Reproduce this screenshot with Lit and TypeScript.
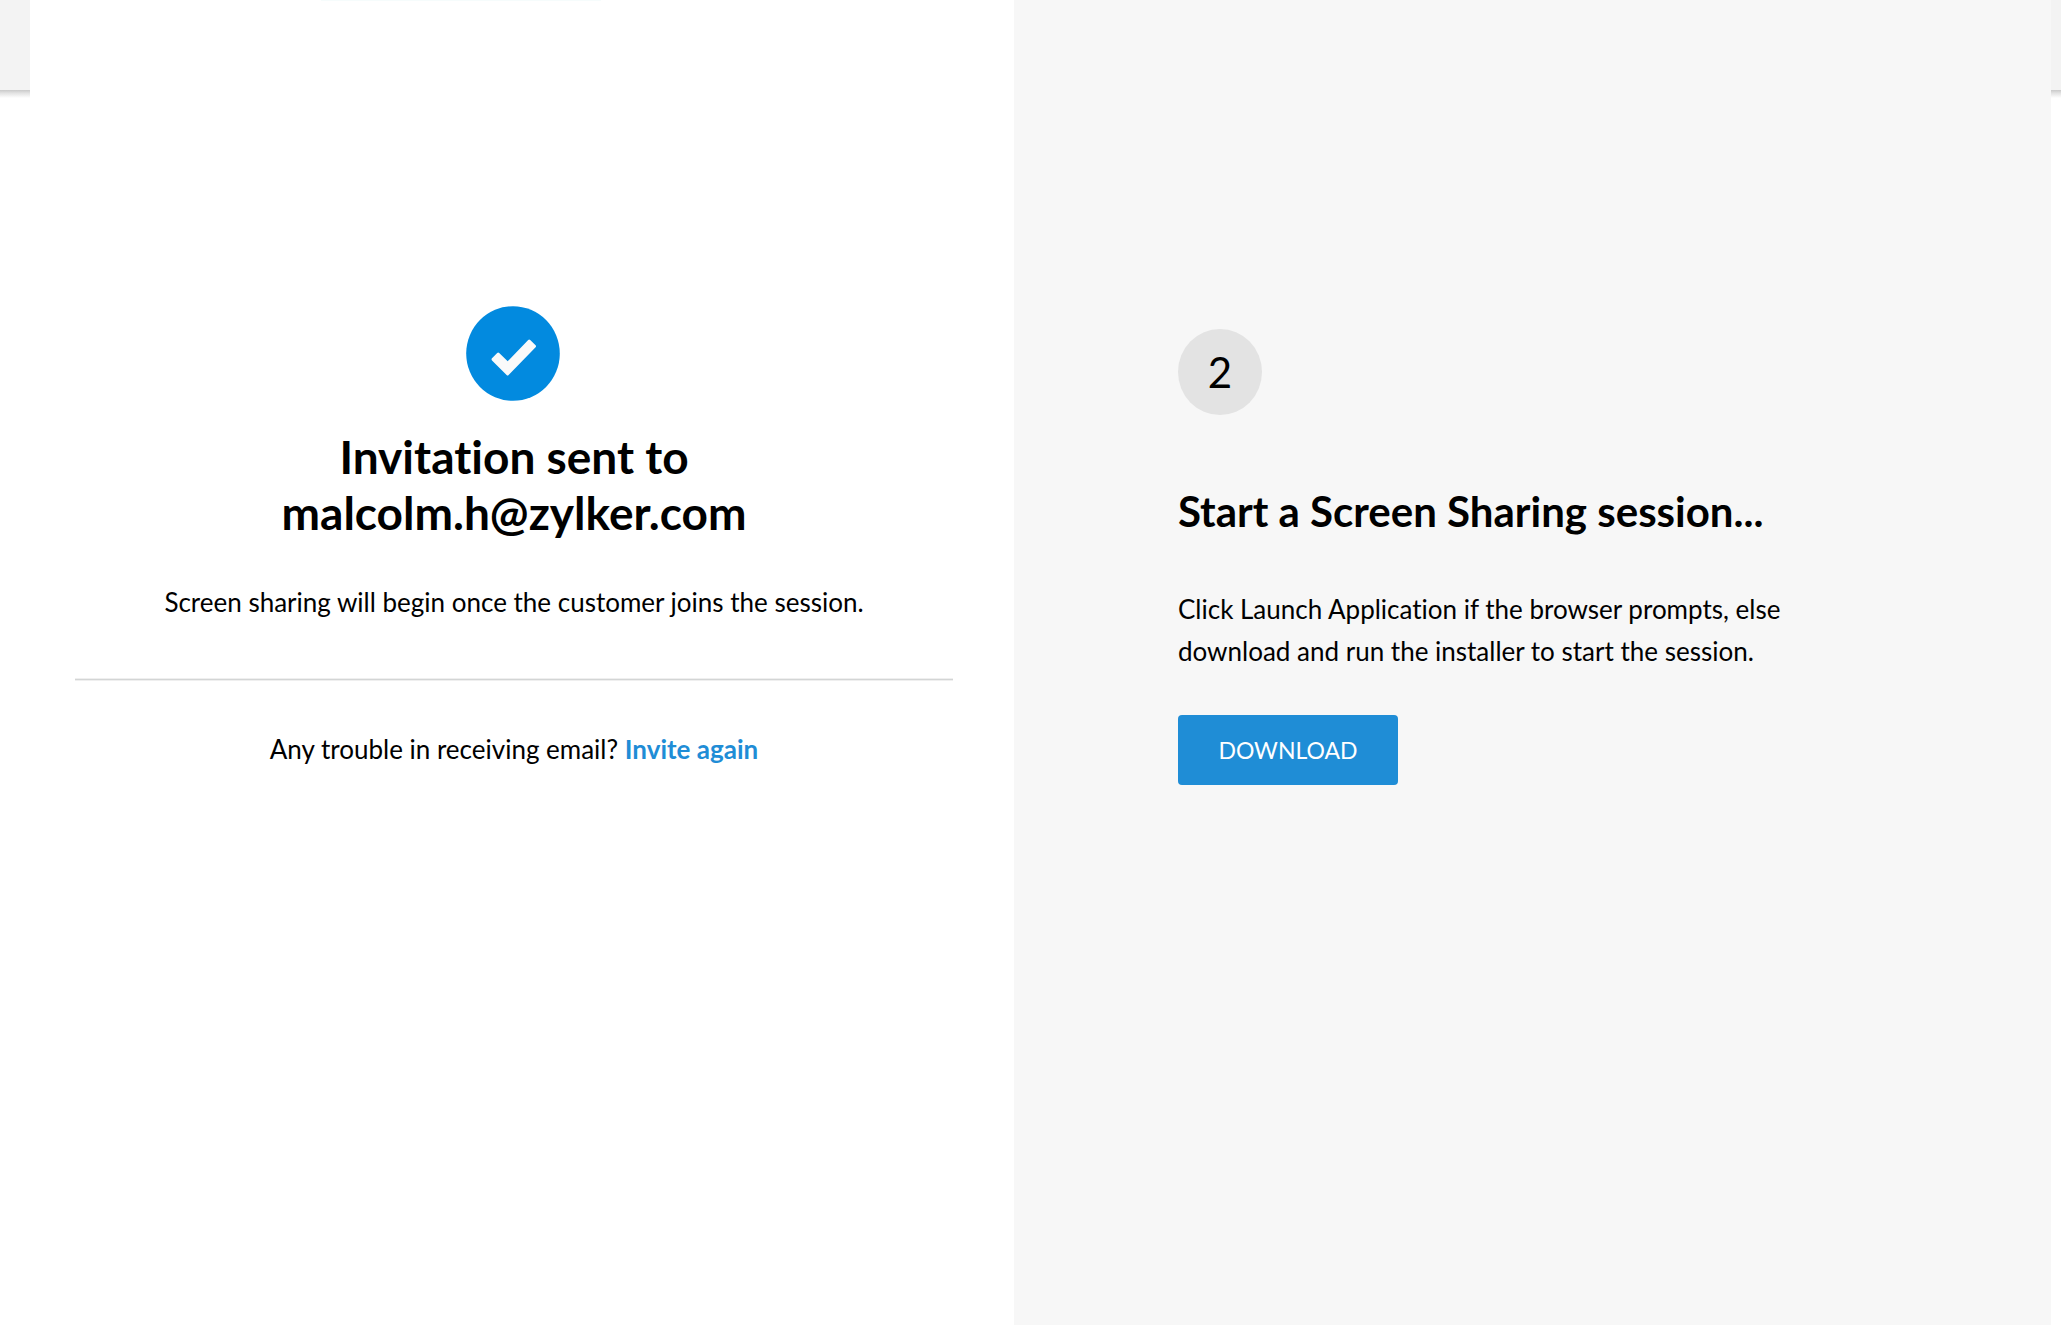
import { LitElement, html, css } from "lit";
import { customElement, property } from "lit/decorators.js";

@customElement("invitation-status")
export class InvitationStatus extends LitElement {
  @property() email = "";

  static styles = css`
    :host {
      display: block;
      background: #fff;
    }
    .tab-edge {
      width: 280px;
      height: 1px;
      margin-left: 291px;
      background: #f6fcfc;
    }
    .content {
      display: flex;
      flex-direction: column;
      align-items: center;
      padding: 305px 61px 40px 45px;
      text-align: center;
    }
    .check {
      display: block;
      width: 96px;
      height: 95px;
    }
    .title {
      margin: 28px 0 40px;
      font-size: 46px;
      line-height: 56px;
      font-weight: 700;
    }
    .email {
      display: block;
    }
    .text {
      margin: 0;
      font-size: 26px;
      line-height: 42px;
    }
    .divider {
      width: 100%;
      height: 1px;
      margin: 55px 0 47px;
      border: 0 solid #efefef;
      border-width: 1px 0;
      background: #d3d5d5;
    }
    .link {
      color: #1f8dd6;
      font-weight: 700;
      text-decoration: none;
    }
  `;

  render() {
    return html`
      <div class="tab-edge"></div>
      <div class="content">
        <svg class="check" viewBox="0 0 96 95" aria-hidden="true">
          <ellipse cx="47" cy="47.5" rx="46.8" ry="47.3" fill="#028adf" />
          <path
            d="M26 52.2 L31.2 46.9 Q32.2 46 33.2 46.9 L41.7 55.2 L62.2 34 Q63.2 33 64.2 34 L69.6 39.3 Q70.5 40.2 69.6 41.2 L42.6 69 Q41.6 70 40.6 69 L26 54.4 Q25 53.3 26 52.2 Z"
            fill="#fafafa"
          />
        </svg>
        <h1 class="title">Invitation sent to <span class="email">${this.email}</span></h1>
        <p class="text">Screen sharing will begin once the customer joins the session.</p>
        <hr class="divider" />
        <p class="text">Any trouble in receiving email? <a class="link" href="#invite">Invite again</a></p>
      </div>
    `;
  }
}

@customElement("session-step")
export class SessionStep extends LitElement {
  @property({ type: Number }) step = 1;

  static styles = css`
    :host {
      display: block;
      background: #f7f7f7;
    }
    .content {
      display: flex;
      flex-direction: column;
      align-items: flex-start;
      padding: 329px 164px 40px;
    }
    .step {
      display: flex;
      align-items: center;
      justify-content: center;
      width: 84px;
      height: 86px;
      border-radius: 50%;
      background: #e3e3e3;
      font-size: 42px;
      line-height: 50px;
    }
    .title {
      margin: 71px 0 52px;
      font-size: 42px;
      line-height: 50px;
      font-weight: 700;
    }
    .text {
      max-width: 640px;
      margin: 0 0 43px;
      font-size: 26px;
      line-height: 42px;
    }
    .download {
      min-width: 220px;
      height: 70px;
      padding: 0 40px;
      border: 0;
      border-radius: 4px;
      background: #1f8dd6;
      color: #fff;
      font-family: inherit;
      font-size: 23px;
      line-height: 30px;
      cursor: pointer;
    }
  `;

  render() {
    return html`
      <div class="content">
        <span class="step">${this.step}</span>
        <h2 class="title">Start a Screen Sharing session...</h2>
        <p class="text">
          Click Launch Application if the browser prompts, else download and run the installer to start the session.
        </p>
        <button class="download" type="button">DOWNLOAD</button>
      </div>
    `;
  }
}

@customElement("app-root")
export class AppRoot extends LitElement {
  static styles = css`
    :host {
      display: block;
      color: #000;
      font-family: Lato, "Liberation Sans", sans-serif;
      font-variant-ligatures: none;
    }
    .page {
      min-height: 100vh;
      padding: 0 10px 0 30px;
      box-sizing: border-box;
      display: flex;
      background: linear-gradient(#f3f3f3 90px, #c9c9c9 90px, #e2e2e2 93px, #fff 98px);
    }
    .dialog {
      flex: 1;
      display: grid;
      grid-template-columns: 984fr 1037fr;
    }
  `;

  render() {
    return html`
      <div class="page">
        <main class="dialog">
          <invitation-status email="malcolm.h@zylker.com"></invitation-status>
          <session-step step="2"></session-step>
        </main>
      </div>
    `;
  }
}
